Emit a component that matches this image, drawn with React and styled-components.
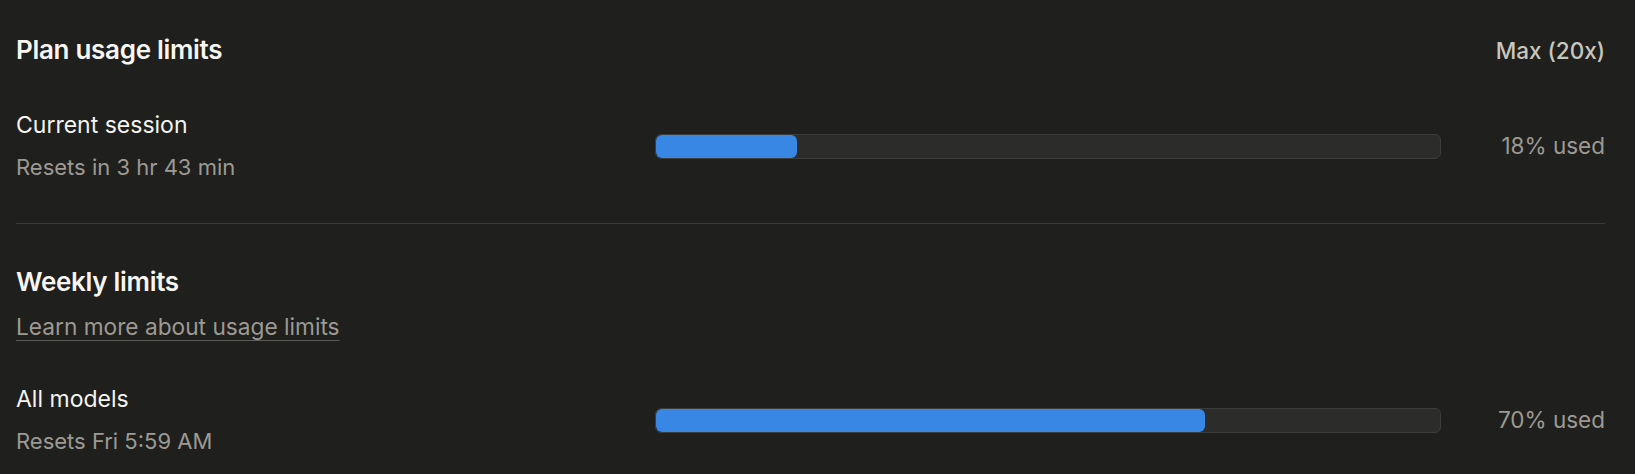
import React from "react";
import styled, { createGlobalStyle } from "styled-components";

const GlobalStyle = createGlobalStyle`
  html, body {
    margin: 0;
    padding: 0;
    background: #1f1f1e;
  }
  body {
    font-family: Inter, "Noto Sans", "Liberation Sans", sans-serif;
    -webkit-font-smoothing: antialiased;
  }
`;

const Page = styled.div`
  min-height: 474px;
  box-sizing: border-box;
  padding: 33px 30px 0 16px;
  background: #1f1f1e;
  color: #f5f4ef;
`;

const Header = styled.div`
  display: flex;
  justify-content: space-between;
  align-items: baseline;
`;

const Title = styled.h2`
  margin: 0;
  font-size: 26px;
  line-height: 33px;
  font-weight: 600;
  color: #f7f6f2;
  letter-spacing: -0.3px;
`;

const Plan = styled.span`
  font-size: 22.5px;
  line-height: 30px;
  color: #c8c6bd;
  font-weight: 500;
`;

const Row = styled.div`
  display: grid;
  grid-template-columns: 1fr 786px 164px;
  align-items: center;
  margin-top: ${(p) => p.$top}px;
`;

const Labels = styled.div`
  display: flex;
  flex-direction: column;
  gap: 12px;
`;

const Label = styled.div`
  font-size: 23px;
  line-height: 30px;
  color: #f5f4ef;
`;

const Sub = styled.div`
  font-size: 22px;
  line-height: 30px;
  color: #9c9a92;
`;

const Track = styled.div`
  height: 25px;
  box-sizing: border-box;
  border: 1px solid #3c3c3a;
  border-radius: 6px;
  background: #2c2c2b;
  overflow: hidden;
`;

const Fill = styled.div`
  height: 100%;
  background: #3987e5;
  border-radius: 6px;
`;

const Used = styled.div`
  text-align: right;
  font-size: 22.5px;
  line-height: 30px;
  color: #9c9a92;
`;

const Divider = styled.hr`
  margin: 41px 0 0;
  border: none;
  height: 1px;
  background: #3a3a38;
`;

const SectionTitle = styled(Title)`
  margin-top: 41px;
`;

const LearnLink = styled.a`
  display: inline-block;
  margin-top: 14px;
  font-size: 22.7px;
  line-height: 30px;
  color: #9c9a92;
  text-decoration: underline;
  text-decoration-color: #5b5a56;
  text-underline-offset: 5px;
  text-decoration-thickness: 1px;
  cursor: pointer;
`;

const UsageRow = ({ label, reset, percent, top }) => (
  <Row $top={top}>
    <Labels>
      <Label>{label}</Label>
      <Sub>{reset}</Sub>
    </Labels>
    <Track>
      <Fill style={{ width: `${percent}%` }} />
    </Track>
    <Used>{percent}% used</Used>
  </Row>
);

export default function App() {
  return (
    <>
      <GlobalStyle />
      <Page>
        <Header>
          <Title>Plan usage limits</Title>
          <Plan>Max (20x)</Plan>
        </Header>
        <UsageRow
          top={44}
          label="Current session"
          reset="Resets in 3 hr 43 min"
          percent={18}
        />
        <Divider />
        <SectionTitle>Weekly limits</SectionTitle>
        <div>
          <LearnLink>Learn more about usage limits</LearnLink>
        </div>
        <UsageRow
          top={42}
          label="All models"
          reset="Resets Fri 5:59 AM"
          percent={70}
        />
      </Page>
    </>
  );
}
